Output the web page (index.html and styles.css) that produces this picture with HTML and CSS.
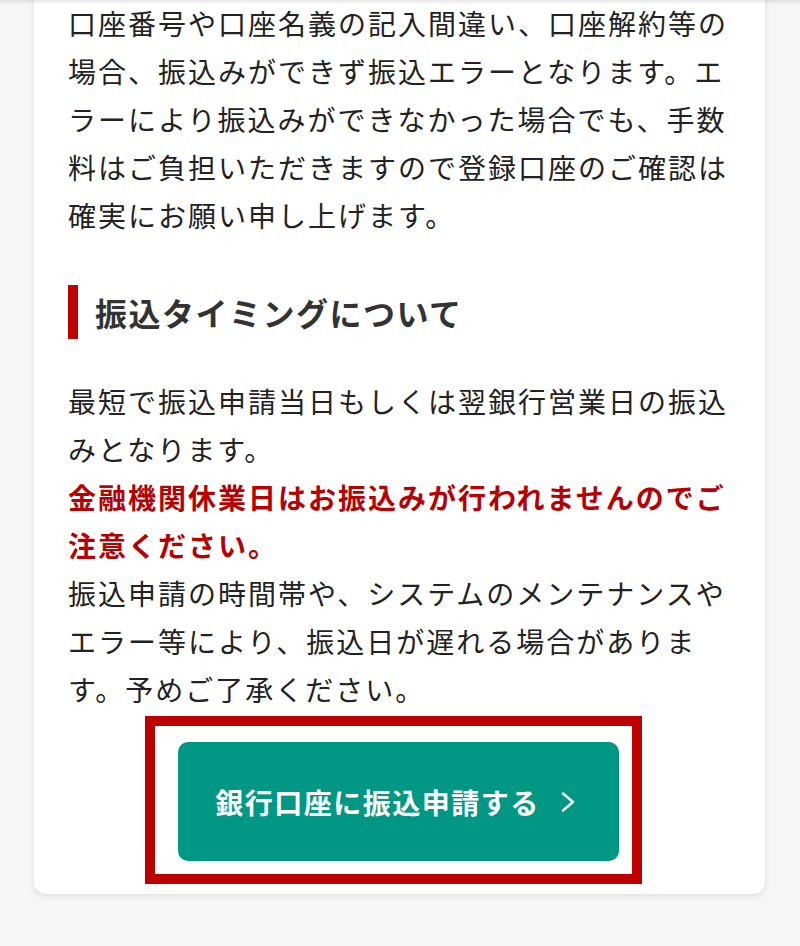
FILE: index.html
```html
<!DOCTYPE html>
<html lang="ja">
<head>
<meta charset="utf-8">
<title>振込タイミングについて</title>
<link rel="stylesheet" href="styles.css">
</head>
<body>
<div class="top-shadow"></div>
<main class="card">
  <p class="text">口座番号や口座名義の記入間違い、口座解約等の場合、振込みができず振込エラーとなります。エラーにより振込みができなかった場合でも、手数料はご負担いただきますので登録口座のご確認は確実にお願い申し上げます。</p>
  <h2 class="heading">振込タイミングについて</h2>
  <p class="text text-second">最短で振込申請当日もしくは翌銀行営業日の振込みとなります。<br><strong class="warn">金融機関休業日はお振込みが行われませんのでご注意ください。</strong><br>振込申請の時間帯や、システムのメンテナンスやエラー等により、振込日が遅れる場合があります。予めご了承ください。</p>
  <div class="btn-wrap">
    <a class="btn" href="#">
      <span class="btn-label">銀行口座に振込申請する</span>
      <svg class="chev" width="16" height="22" viewBox="0 0 16 22" aria-hidden="true"><path d="M3 2.5 L13 11 L3 19.5" fill="none" stroke="#ffffff" stroke-width="2.4" stroke-linecap="round" stroke-linejoin="round"/></svg>
    </a>
    <div class="highlight"></div>
  </div>
</main>
</body>
</html>
```

FILE: styles.css
```css
html, body {
  margin: 0;
  padding: 0;
}
body {
  background: #f6f6f6;
  font-family: "Noto Sans CJK JP", "Noto Sans", sans-serif;
  color: #222222;
  height: 946px;
  overflow: hidden;
  position: relative;
}
.top-shadow {
  position: absolute;
  left: 0;
  top: 0;
  width: 100%;
  height: 5px;
  background: linear-gradient(to bottom, rgba(0,0,0,0.09), rgba(0,0,0,0));
  z-index: 5;
}
.card {
  margin: -20px 35px 0 34px;
  padding: 19px 36px 33px 34px;
  background: #ffffff;
  border-radius: 12px;
  box-shadow: 0 2px 6px rgba(0,0,0,0.10);
}
.text {
  margin: 0;
  width: 661px;
  font-size: 28px;
  letter-spacing: 2px;
  line-height: 48px;
}
.heading {
  margin: 46px 0 0 0;
  height: 54px;
  border-left: 10px solid #c00000;
  padding-left: 17px;
  font-size: 32px;
  font-weight: 700;
  letter-spacing: 1.5px;
  line-height: 54px;
  color: #333333;
}
.text-second {
  margin-top: 38px;
}
.warn {
  color: #b70000;
  font-weight: 700;
}
.btn-wrap {
  position: relative;
  width: 441px;
  margin: 29px auto 0 auto;
}
.btn {
  display: flex;
  align-items: center;
  justify-content: center;
  gap: 20px;
  height: 119px;
  padding-right: 6px;
  background: #009884;
  border-radius: 10px;
  color: #ffffff;
  text-decoration: none;
  font-size: 28px;
  font-weight: 700;
  letter-spacing: 1.5px;
}
.btn-label {
  line-height: 1;
}
.chev {
  display: block;
}
.highlight {
  position: absolute;
  left: -33px;
  top: -26px;
  width: 477px;
  height: 148px;
  border: 10px solid #bd0000;
  pointer-events: none;
}
```
